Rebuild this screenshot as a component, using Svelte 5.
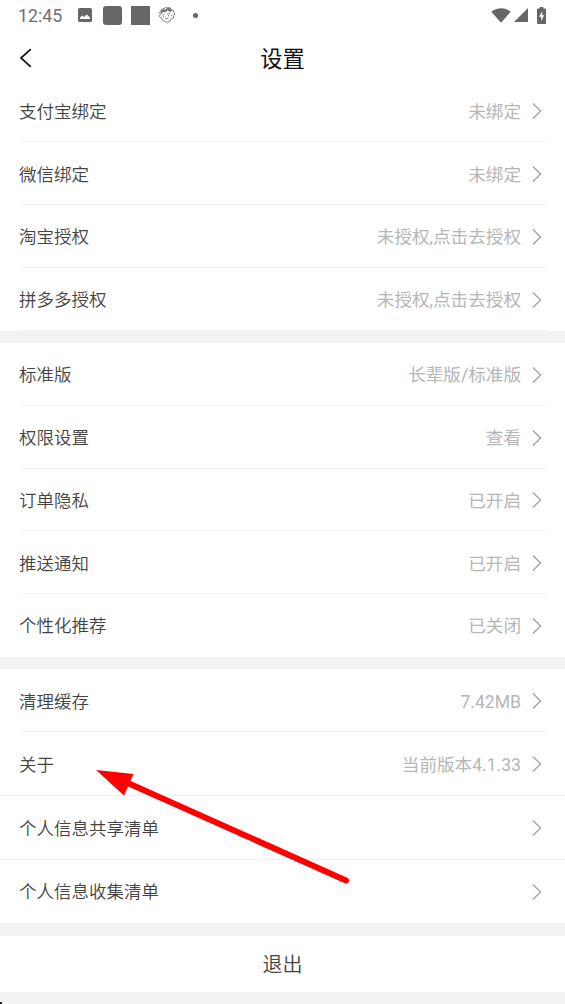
<script lang="ts">
	type Row = { label: string; value?: string; full?: boolean; tall?: boolean; last?: boolean };

	const groups: Row[][] = [
		[
			{ label: '支付宝绑定', value: '未绑定' },
			{ label: '微信绑定', value: '未绑定' },
			{ label: '淘宝授权', value: '未授权,点击去授权' },
			{ label: '拼多多授权', value: '未授权,点击去授权' }
		],
		[
			{ label: '标准版', value: '长辈版/标准版' },
			{ label: '权限设置', value: '查看' },
			{ label: '订单隐私', value: '已开启' },
			{ label: '推送通知', value: '已开启' },
			{ label: '个性化推荐', value: '已关闭', last: true }
		],
		[
			{ label: '清理缓存', value: '7.42MB' },
			{ label: '关于', value: '当前版本4.1.33', full: true, tall: true },
			{ label: '个人信息共享清单', full: true, tall: true },
			{ label: '个人信息收集清单', tall: true, last: true }
		]
	];
</script>

<div class="screen">
	<div class="status">
		<span class="time">12:45</span>
		<svg class="photo" width="16" height="16" viewBox="0 0 16 16">
			<rect x="1" y="1" width="14" height="14" rx="1.5" fill="#666" />
			<path d="M3 12V10.5L5.3 8.6L7 10L9.8 7.5L13 10.5V12Z" fill="#fff" />
		</svg>
		<span class="block round"></span>
		<span class="block"></span>
		<svg class="face" width="18" height="18" viewBox="0 0 18 18" fill="none" stroke="#777">
			<path
				d="M2.5 8L1.2 6.5L2.5 5.5L3.5 3L6 3L7.5 1.2L9.5 2.2L12 1.6L13.5 3.6L15.8 4.5L15.4 6.5L17 8L15.5 10L15.8 12L13.5 12.5L12 15L9.5 16.8L7.5 15.5L4.5 14.8L3.5 12L1.3 10.5L2.5 8"
				stroke-width=".9"
			/>
			<path d="M2.2 6L5.5 2.5L7 4L9.5 1.5L12 2L14.5 4.5L12 6L9.5 4.5L7.5 6.5L5 6L3.5 8Z" fill="#777" stroke="none" />
			<path
				d="M4.5 9L6.5 8.4M5.3 10V11.5M9 8L12 7.4M10.5 9V10.5M7 13L9 12.4L10.5 13M13 8.5L14 10"
				stroke-width=".9"
			/>
		</svg>
		<span class="dot"></span>
		<div class="system">
			<svg width="20" height="15" viewBox="0 0 20 15">
				<path d="M.3 3.8C6-1 14-1 19.7 3.8L10 14.8Z" fill="#666" />
			</svg>
			<svg width="14" height="14" viewBox="0 0 14 14">
				<path d="M14 0V14H0Z" fill="#666" />
			</svg>
			<svg class="battery" width="9" height="17" viewBox="0 0 9 17">
				<path d="M2.7 0H6.3V1.5H8Q9 1.5 9 2.5V16Q9 17 8 17H1Q0 17 0 16V2.5Q0 1.5 1 1.5H2.7Z" fill="#666" />
				<path d="M5.2 4.2L2 9.8H4.1V14L7.2 8.3H5.2Z" fill="#fff" />
			</svg>
		</div>
	</div>

	<header>
		<svg class="back" width="14" height="20" viewBox="0 0 14 20">
			<path d="M11.8 1.2L2 10L11.8 18.8" fill="none" stroke="#111" stroke-width="1.7" />
		</svg>
		<h1>设置</h1>
	</header>

	{#each groups as rows}
		<section>
			{#each rows as row}
				<div class="row" class:full={row.full} class:tall={row.tall} class:last={row.last}>
					<span class="label">{row.label}</span>
					{#if row.value}
						<span class="value">{row.value}</span>
					{/if}
					<svg class="chevron" width="10" height="18" viewBox="0 0 10 18">
						<path d="M.9 1.5L8.6 9L.9 16.5" fill="none" stroke="#a0a0a0" stroke-width="1.3" />
					</svg>
				</div>
			{/each}
		</section>
	{/each}

	<button>退出</button>
	<span class="speck"></span>

	<svg class="arrow" width="256" height="120" viewBox="0 0 256 120">
		<path d="M34 18L250 114.5" stroke="#fe0000" stroke-width="6" stroke-linecap="round" />
		<path d="M0 4L37.5 8L28 29.5Z" fill="#fe0000" />
	</svg>
</div>

<style>
	:global(body) {
		margin: 0;
		background: #f2f2f2;
	}

	.screen {
		position: relative;
		box-sizing: border-box;
		width: 565px;
		height: 1004px;
		overflow: hidden;
		background: #f2f2f2;
		color: #444;
		font-family: Roboto, 'Noto Sans CJK SC', sans-serif;
		font-size: 17.5px;
		font-weight: 350;
	}

	.status {
		display: flex;
		align-items: center;
		height: 30px;
		padding: 0 17px 0 18px;
		background: #fff;
	}

	.time {
		width: 59px;
		color: #707070;
		font-size: 17.8px;
		font-weight: 400;
		line-height: 30px;
		padding-top: 2px;
	}

	.block {
		width: 19px;
		height: 19px;
		margin-left: 9px;
		background: #666;
	}

	.block.round {
		margin-left: 10px;
		border-radius: 3px;
	}

	.face {
		margin-left: 8px;
	}

	.dot {
		width: 5px;
		height: 5px;
		margin-left: 17px;
		border-radius: 50%;
		background: #666;
	}

	.system {
		display: flex;
		align-items: center;
		gap: 3px;
		margin-left: auto;
		margin-right: 2px;
	}

	.battery {
		margin-left: 6px;
	}

	header {
		display: grid;
		grid-template-columns: 60px 1fr 60px;
		align-items: center;
		box-sizing: border-box;
		height: 49.5px;
		padding-top: 6px;
		background: #fff;
	}

	.back {
		margin-left: 19px;
	}

	h1 {
		margin: 0;
		padding-top: 2px;
		color: #111;
		font-size: 22.3px;
		font-weight: 400;
		line-height: 30px;
		text-align: center;
	}

	section {
		margin-bottom: 12.5px;
		background: #fff;
	}

	.row {
		display: flex;
		align-items: center;
		box-sizing: border-box;
		height: 62.75px;
		margin: 0 19px;
		padding: 2px 4px 0 0;
		border-bottom: 1px solid #f3f3f3;
	}

	.row.tall {
		height: 63.8px;
	}

	.row.full {
		margin: 0;
		padding: 2px 23px 0 19px;
	}

	.row.last {
		border-bottom-color: transparent;
	}

	.label,
	.value {
		padding-top: 1px;
		line-height: 26px;
	}

	.value {
		margin-left: auto;
		color: #b6b6b6;
		font-size: 17.6px;
		font-weight: 400;
	}

	.chevron {
		margin-left: 11px;
	}

	.label + .chevron {
		margin-left: auto;
	}

	button {
		display: block;
		width: 100%;
		height: 56.5px;
		padding: 0 0 2px;
		border: 0;
		background: #fff;
		color: #444;
		font: inherit;
		font-size: 20px;
	}

	.speck {
		position: absolute;
		bottom: 0;
		left: 0;
		width: 2px;
		height: 2px;
		background: #222;
	}

	.arrow {
		position: absolute;
		top: 766px;
		left: 96px;
	}
</style>
